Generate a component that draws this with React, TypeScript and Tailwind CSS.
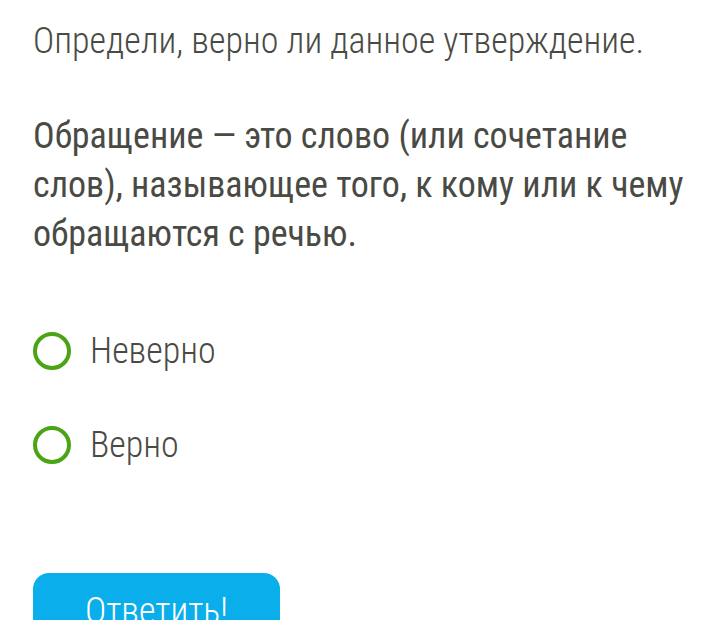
import React from "react";

function Option({ label }: { label: string }) {
  return (
    <div className="flex items-center h-[48px]">
      <span className="block w-[38px] h-[38px] rounded-full border-[4px] border-[#4ba414] shrink-0" />
      <span className="ml-[19px] text-[36px] font-light leading-[48px]">{label}</span>
    </div>
  );
}

export default function App() {
  return (
    <div
      className="w-[720px] h-[620px] overflow-hidden bg-white text-[#4a4a44] pl-[33px] pr-[20px] pt-[17px] [font-stretch:75%]"
      style={{ fontFamily: "Roboto, 'Noto Sans', sans-serif" }}
    >
      <p className="text-[36px] font-light leading-[48px]">Определи, верно ли данное утверждение.</p>
      <p className="mt-[47px] text-[36px] font-normal leading-[49px] w-[655px]">
        Обращение — это слово (или сочетание слов), называющее того, к кому или к чему обращаются с речью.
      </p>
      <div className="mt-[68px] flex flex-col gap-[46px]">
        <Option label="Неверно" />
        <Option label="Верно" />
      </div>
      <button className="mt-[104px] w-[247px] h-[76px] rounded-[16px] bg-[#0aaeeb] text-white text-[36px] font-light leading-[48px] flex items-center justify-center">
        Ответить!
      </button>
    </div>
  );
}
